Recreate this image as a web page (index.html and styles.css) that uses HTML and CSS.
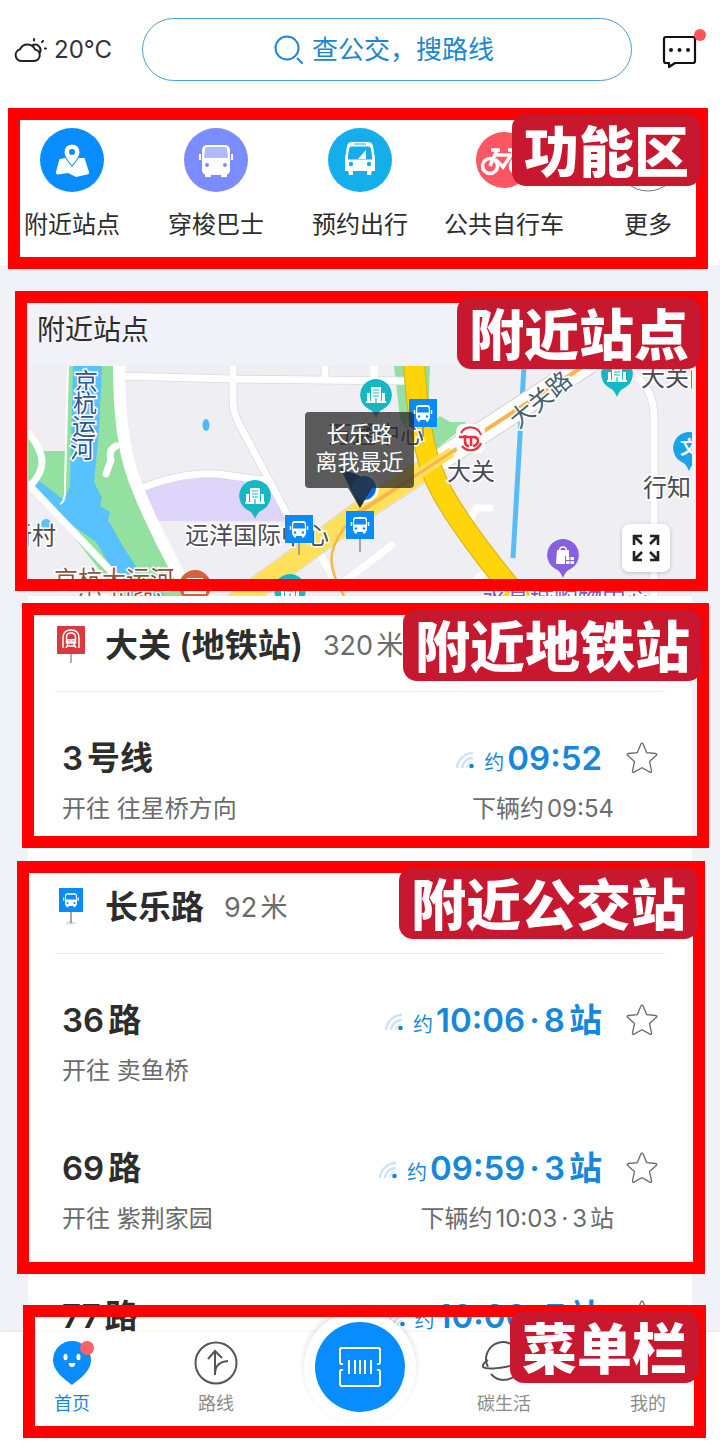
FILE: index.html
```html
<!DOCTYPE html>
<html lang="zh-CN">
<head>
    <meta charset="UTF-8">
    <meta name="viewport" content="width=device-width, initial-scale=1.0">
    <title>附近站点</title>
    <link rel="stylesheet" href="styles.css">
</head>
<body>
    <!-- shared symbols -->
    <svg class="symbols" aria-hidden="true">
        <symbol id="bus" viewBox="0 0 28 28">
            <rect width="28" height="28" fill="#0a8bfa"/>
            <rect x="7" y="6" width="14" height="15" rx="3" fill="#fff"/>
            <path d="M8.500 8h11l.5 5.500H8z" fill="#0a8bfa"/>
            <path d="M5.500 11v4M22.500 11v4" stroke="#fff" stroke-width="1.500"/>
            <path d="M8 20h3v2.500H9zM17 20h3l-1 2.500h-2z" fill="#fff"/>
            <circle cx="10" cy="17.500" r="1.200" fill="#0a8bfa"/>
            <circle cx="18" cy="17.500" r="1.200" fill="#0a8bfa"/>
        </symbol>
        <symbol id="star" viewBox="0 0 32 32">
            <path d="M16 1.200q.8 0 1.200 1l3.500 8.400 8.800.9q2.200.4.700 2l-6.700 6 2 9.400q.2 2-1.600 1.200L16 25.700l-7.900 4.400q-1.800.8-1.600-1.200l2-9.400-6.700-6q-1.500-1.600.7-2l8.800-.9 3.500-8.400q.4-1 1.200-1z" fill="none" stroke="#6b6b6b" stroke-width="1.300"/>
        </symbol>
        <symbol id="signal" viewBox="0 0 20 20">
            <path d="M1 18A16 16 0 0 1 17 3M6 18A11 11 0 0 1 17 8" fill="none" stroke="#cfe4f2" stroke-width="2.500"/>
            <path d="M10.500 18A6 6 0 0 1 16 12" fill="none" stroke="#d9eaf5" stroke-width="1.500"/>
            <circle cx="15.500" cy="16" r="2.300" fill="#1784d2"/>
        </symbol>
        <symbol id="building" viewBox="0 0 34 42">
            <path d="M17 1a16 16 0 0 1 7 30.300c-3 1.500-5 3.700-7 8.700-2-5-4-7.200-7-8.700A16 16 0 0 1 17 1z" fill="#14b8c4"/>
            <path d="M12 9h10v15H12zM8 15h3v9H8zM23 15h3v9h-3zM7 23h20v2H7z" fill="#fff"/>
            <path d="M14 12h6M14 15h6M14 18h6M17 20v5" stroke="#14b8c4" stroke-width="1.200"/>
        </symbol>
    </svg>

    <div class="app">
        <header class="topbar">
            <div class="weather">
                <svg width="34" height="26" viewBox="0 0 34 26" fill="none" stroke="#222" stroke-width="2" stroke-linecap="round">
                    <path d="M7 24a6 6 0 0 1-.8-11.800A8 8 0 0 1 21 12.500 5.800 5.800 0 0 1 20 24z"/>
                    <path d="M19 8a5.500 5.500 0 0 1 7 7.500M20 2v1.500M29 4l-1 1M31 11.500h1"/>
                </svg>
                <span>20°C</span>
            </div>
            <label class="search">
                <svg width="30" height="30" viewBox="0 0 30 30" fill="none" stroke="#1c86d1" stroke-width="2">
                    <circle cx="13" cy="13" r="11.500"/>
                    <path d="M23.500 23.500l4.500 4.500" stroke-linecap="round"/>
                </svg>
                <input type="text" placeholder="查公交，搜路线" aria-label="查公交，搜路线">
            </label>
            <button class="message" aria-label="消息">
                <svg width="44" height="42" viewBox="0 0 44 42">
                    <path d="M4 8h27q2 0 2 2v22q0 2-2 2H13l-6 4v-4H4q-2 0-2-2V10q0-2 2-2z" fill="none" stroke="#111" stroke-width="2.200" stroke-linejoin="round"/>
                    <circle cx="9" cy="21" r="2" fill="#111"/>
                    <circle cx="17.500" cy="21" r="2" fill="#111"/>
                    <circle cx="26" cy="21" r="2" fill="#111"/>
                    <circle cx="38" cy="6" r="6" fill="#ff5454"/>
                </svg>
            </button>
        </header>

        <main class="content">
            <section class="services">
                <a class="service" href="#">
                    <svg width="64" height="64" viewBox="0 0 64 64">
                        <circle cx="32" cy="32" r="32" fill="#078dff"/>
                        <path d="M19.500 31l6-1 6.500 9 6.500-9h6l4.500 14c.3 1.500-.5 2.500-2 2.500L36 49l-8-4-10 1.500c-1.500 0-2.500-1-2-2.500z" fill="#fff"/>
                        <path d="M32 16a8 8 0 0 1 8 8c0 5-5 10-8 14-3-4-8-9-8-14a8 8 0 0 1 8-8z" fill="#fff" stroke="#078dff" stroke-width="1"/>
                        <circle cx="32" cy="24" r="3" fill="#078dff"/>
                    </svg>
                    <span>附近站点</span>
                </a>
                <a class="service" href="#">
                    <svg width="64" height="64" viewBox="0 0 64 64">
                        <circle cx="32" cy="32" r="32" fill="#7b8cff"/>
                        <rect x="18" y="17" width="28" height="30" rx="5" fill="#fff"/>
                        <path d="M21 46h6v3h-6zM37 46h6v3h-6zM15 26h2v6h-2zM47 26h2v6h-2z" fill="#fff"/>
                        <path d="M23 19h18q2 0 2 2l1 9H20l1-9q0-2 2-2z" fill="#b3b9ff"/>
                        <circle cx="23" cy="37" r="2" fill="#7b8cff"/>
                        <circle cx="41" cy="37" r="2" fill="#7b8cff"/>
                    </svg>
                    <span>穿梭巴士</span>
                </a>
                <a class="service" href="#">
                    <svg width="64" height="64" viewBox="0 0 64 64">
                        <circle cx="32" cy="32" r="32" fill="#14aeea"/>
                        <path d="M24 14h16q4 0 5 4l2 12v13H17V30l2-12q1-4 5-4z" fill="#fff"/>
                        <path d="M20 42h5v5h-4zM39 42h5l-1 5h-4z" fill="#fff"/>
                        <path d="M23 19h18q1 0 1.300 1.500L44 31H20l1.700-10.500Q22 19 23 19zM26 16h12" fill="#14aeea" stroke="#14aeea"/>
                        <path d="M30 31l8-9v9" fill="#fff"/>
                        <circle cx="23" cy="36" r="2.200" fill="#14aeea"/>
                        <circle cx="41" cy="36" r="2.200" fill="#14aeea"/>
                    </svg>
                    <span>预约出行</span>
                </a>
                <a class="service" href="#">
                    <svg width="64" height="64" viewBox="0 0 64 64">
                        <circle cx="32" cy="32" r="28" fill="#ff5663"/>
                        <g fill="none" stroke="#fff" stroke-width="3.500">
                            <circle cx="18" cy="38" r="7.500"/>
                            <circle cx="46" cy="38" r="7.500"/>
                            <path d="M19 22h9M25 22l-7 16M24 27h15l-8 12-8-8M36 22h4l6 16"/>
                        </g>
                    </svg>
                    <span>公共自行车</span>
                </a>
                <a class="service" href="#">
                    <svg width="64" height="64" viewBox="0 0 64 64">
                        <circle cx="32" cy="32" r="31" fill="#fff" stroke="#777"/>
                        <circle cx="20" cy="32" r="3" fill="#555"/>
                        <circle cx="32" cy="32" r="3" fill="#555"/>
                        <circle cx="44" cy="32" r="3" fill="#555"/>
                    </svg>
                    <span>更多</span>
                </a>
                <div class="frame frame-services"><strong class="tag">功能区</strong></div>
            </section>

            <section class="nearby">
                <h2>附近站点</h2>
                <div class="map">
                    <svg class="map-canvas" viewBox="28 366 664 230" preserveAspectRatio="xMidYMid slice">
                        <rect x="28" y="366" width="664" height="230" fill="#eeeef3"/>
                        <!-- parks -->
                        <g fill="#93e0a0">
                            <path d="M68 366h47l4 80 24 60 26 50 20 40H120L70 532l-6-12-36-40v-42l12 13h26z"/>
                            <path d="M394 366h36l-2 60 12-10 10 6 16 0-6 8-20 16-4 28 14 6-10 8-40-70z"/>
                        </g>
                        <!-- canal -->
                        <path d="M73 366h29l-3 64-5 52 8 16-2 8 10 6-2 8 16 28 22 34 20 14h-38l-32-54-28-20-38-34 8-8 26 20 6-14z" fill="#58c2ff"/>
                        <path d="M68 366l-3 120q1 16-5 18" fill="none" stroke="#fff" stroke-width="2"/>
                        <path d="M142 490q60-20 130-8l15 39H155z" fill="#dfd5fb"/>
                        <ellipse cx="206" cy="425" rx="3.500" ry="6" fill="#4dbaf5"/>
                        <circle cx="46" cy="524" r="5" fill="#58c2ff"/>
                        <path d="M524 366l-4 70-7 122" fill="none" stroke="#58bdf7" stroke-width="5"/>
                        <!-- minor roads -->
                        <g fill="none" stroke="#d9d9de" stroke-width="8.500">
                            <path d="M120 376l113 3 175 2M233 366v35q0 14 10 30l55 104M325 366v12M142 488q50-20 90-12l38 5"/>
                            <path d="M638 378q16 14 16 40v178"/>
                        </g>
                        <g fill="none" stroke="#fff" stroke-width="7">
                            <path d="M120 376l113 3 175 2M233 366v35q0 14 10 30l55 104M325 366v12M142 488q50-20 90-12l38 5M374 366v20"/>
                            <path d="M638 378q16 14 16 40v178M318 550l16 30M340 585l52-40M460 530l10-10 6-12h14M476 580l16-14" stroke-linecap="round"/>
                            <path d="M28 432q14 18 14 30t-12 24l100 105"/>
                            <path d="M116 446q-8 4-5 14l-5 14" stroke-linecap="round"/>
                            <path d="M119 366q0 70 14 110t52 110l10 12" stroke-width="12"/>
                        </g>
                        <!-- trunk roads -->
                        <path d="M232 606l128-94 230-150" fill="none" stroke="#d7d3cc" stroke-width="23"/>
                        <path d="M232 606l128-94 230-150" fill="none" stroke="#fff" stroke-width="21"/>
                        <path d="M232 606l128-94 70-46" fill="none" stroke="#ffe05a" stroke-width="21"/>
                        <path d="M352 517l238-155" fill="none" stroke="#f6b64a" stroke-width="4"/>
                        <path d="M344 596q-18-30-10-50t26-34" fill="none" stroke="#f6b64a" stroke-width="2.500"/>
                        <path d="M414 360q4 80 22 120t86 122" fill="none" stroke="#d8ae12" stroke-width="22"/>
                        <path d="M414 360q4 80 22 120t86 122" fill="none" stroke="#ffd40a" stroke-width="20"/>
                        <path d="M400 486l52-34" stroke="#ffe05a" stroke-width="10"/>
                        <path d="M395 489l60-39" stroke="#f6b64a" stroke-width="3"/>
                        <!-- labels -->
                        <g class="map-label">
                            <text class="label-water" text-anchor="middle"><tspan x="86" y="390">京</tspan><tspan x="85" y="412">杭</tspan><tspan x="84" y="435">运</tspan><tspan x="82" y="458">河</tspan></text>
                            <text x="8" y="544">新村</text>
                            <text x="185" y="544">远洋国际中心</text>
                            <text x="328" y="443">万通中心</text>
                            <text x="447" y="480">大关</text>
                            <text class="label-road" text-anchor="middle" transform="translate(546 406) rotate(-40)">大关路</text>
                            <text x="641" y="386">大关门</text>
                            <text x="643" y="496">行知</text>
                            <text class="label-sight" x="54" y="588">京杭大运河</text>
                            <text class="label-sight" x="75" y="612">(杭州段)</text>
                            <text class="label-mall" x="482" y="607">水晶城购物中心</text>
                        </g>
                        <!-- pins -->
                        <use href="#building" x="359" y="378" width="34" height="42"/>
                        <use href="#building" x="238" y="479" width="34" height="42"/>
                        <use href="#building" x="600" y="357" width="34" height="42"/>
                        <use href="#building" x="273" y="573" width="34" height="42"/>
                        <circle cx="195" cy="586" r="16" fill="#d5603a"/>
                        <path d="M187 578h16v4h-3l2 8h4v4h-22v-4h4l2-8h-3z" fill="#fff"/>
                        <path d="M689 432a16 16 0 0 1 7 30.300c-3 1.500-5 3.700-7 8.700-2-5-4-7.200-7-8.700A16 16 0 0 1 689 432z" fill="#1aa3e8"/>
                        <text class="pin-text" x="680" y="454">文</text>
                        <path d="M563 539a16 16 0 0 1 7 30.300c-3 1.500-5 3.700-7 8.700-2-5-4-7.200-7-8.700A16 16 0 0 1 563 539z" fill="#8660e0"/>
                        <path d="M557 550h12v14h-13zM566 557h8v7h-8z" fill="#fff"/>
                        <path d="M559.500 551q0-4 3.500-4t3.500 4" fill="none" stroke="#fff" stroke-width="1.500"/>
                        <path d="M565.500 556v9M570 557v7M566 560.500h8" stroke="#8660e0"/>
                        <rect x="456" y="424" width="29" height="29" rx="7" fill="#fff"/>
                        <g fill="none" stroke="#e8303f">
                            <path d="M461 433a11 11 0 0 1 20 2M481 443a11 11 0 0 1-19 3" stroke-width="2.200"/>
                            <path d="M459 437h14q5 0 5 4t-5 5M465 435v6q0 5 4 5M471 437v9" stroke-width="2.600"/>
                        </g>
                        <circle cx="364" cy="488" r="15" fill="#fff"/>
                        <path d="M340 468l20 8 10 14-10 18z" fill="#06468a"/>
                        <circle cx="364" cy="488" r="12" fill="#0a6be0"/>
                        <path d="M423 425v12M299 541v14M360 538v14" stroke="#8a8f96" stroke-width="1.500"/>
                        <use href="#bus" x="409" y="399" width="28" height="28"/>
                        <use href="#bus" x="285" y="515" width="28" height="28"/>
                        <use href="#bus" x="346" y="511" width="28" height="28"/>
                    </svg>
                    <p class="bubble">长乐路<br>离我最近</p>
                    <button class="expand" aria-label="放大地图">
                        <svg width="30" height="30" viewBox="0 0 30 30" fill="none" stroke="#222" stroke-width="2.600">
                            <path d="M3 12V3h8M3 3l8 8M19 3h8v9M27 3l-8 8M3 18v9h8M3 27l8-8M27 18v9h-8M27 27l-8-8"/>
                        </svg>
                    </button>
                </div>
                <div class="frame frame-nearby"><strong class="tag">附近站点</strong></div>
            </section>

            <div class="stations">
                <section class="station">
                    <div class="station-head">
                        <svg width="28" height="38" viewBox="0 0 28 38">
                            <path d="M14 27v10" stroke="#999" stroke-width="1.500"/>
                            <rect width="28" height="28" rx="1" fill="#d93a3f"/>
                            <g fill="none" stroke="#fff" stroke-width="1.500">
                                <path d="M6 22V12q0-8 8-8t8 8v10"/>
                                <path d="M9.500 17V11q0-4 4.500-4t4.500 4v6zM11 18l-2 4M17 18l2 4M10 20h8"/>
                            </g>
                            <path d="M10 13h8v4h-8z" fill="#fff"/>
                            <path d="M11.500 15h1M15.500 15h1" stroke="#d93a3f" stroke-width="1.500"/>
                        </svg>
                        <h3>大关 (地铁站)</h3>
                        <span class="distance">320米</span>
                    </div>
                    <div class="line">
                        <div class="line-main">
                            <strong class="line-name">3号线</strong>
                            <span class="eta"><svg width="20" height="20"><use href="#signal"/></svg><small>约</small><b>09:52</b></span>
                            <button class="favorite" aria-label="收藏 3号线"><svg width="32" height="32"><use href="#star"/></svg></button>
                        </div>
                        <div class="line-sub"><span>开往 往星桥方向</span><span>下辆约09:54</span></div>
                    </div>
                    <div class="frame frame-metro"><strong class="tag">附近地铁站</strong></div>
                </section>

                <section class="station">
                    <div class="station-head">
                        <svg width="28" height="38" viewBox="0 0 28 38">
                            <ellipse cx="14" cy="35" rx="5" ry="1.500" fill="#d5e2ec"/>
                            <path d="M14 24v11" stroke="#777" stroke-width="1.300"/>
                            <use href="#bus" x="2" y="0" width="24" height="24"/>
                        </svg>
                        <h3>长乐路</h3>
                        <span class="distance">92米</span>
                    </div>
                    <div class="line">
                        <div class="line-main">
                            <strong class="line-name">36路</strong>
                            <span class="eta"><svg width="20" height="20"><use href="#signal"/></svg><small>约</small><b>10:06<span class="dot">·</span>8站</b></span>
                            <button class="favorite" aria-label="收藏 36路"><svg width="32" height="32"><use href="#star"/></svg></button>
                        </div>
                        <div class="line-sub"><span>开往 卖鱼桥</span></div>
                    </div>
                    <div class="line">
                        <div class="line-main">
                            <strong class="line-name">69路</strong>
                            <span class="eta"><svg width="20" height="20"><use href="#signal"/></svg><small>约</small><b>09:59<span class="dot">·</span>3站</b></span>
                            <button class="favorite" aria-label="收藏 69路"><svg width="32" height="32"><use href="#star"/></svg></button>
                        </div>
                        <div class="line-sub"><span>开往 紫荆家园</span><span>下辆约10:03<span class="dot">·</span>3站</span></div>
                    </div>
                    <div class="line">
                        <div class="line-main">
                            <strong class="line-name">77路</strong>
                            <span class="eta"><svg width="20" height="20"><use href="#signal"/></svg><small>约</small><b>10:00<span class="dot">·</span>7站</b></span>
                            <button class="favorite" aria-label="收藏 77路"><svg width="32" height="32"><use href="#star"/></svg></button>
                        </div>
                    </div>
                    <div class="frame frame-bus"><strong class="tag">附近公交站</strong></div>
                </section>
            </div>
        </main>

        <nav class="tabbar">
            <a class="tab active" href="#">
                <svg width="48" height="46" viewBox="0 0 48 46">
                    <path d="M24 1a19 19 0 0 1 19 19c0 12-13 20-19 25C18 40 5 32 5 20A19 19 0 0 1 24 1z" fill="#0a8bff"/>
                    <ellipse cx="17.500" cy="17" rx="2" ry="3.300" fill="#fff"/>
                    <ellipse cx="30.500" cy="17" rx="2" ry="3.300" fill="#fff"/>
                    <path d="M20.500 23h7q-.5 4-3.500 4t-3.500-4z" fill="#fff"/>
                    <circle cx="39" cy="8" r="7" fill="#ff5f66"/>
                </svg>
                <span>首页</span>
            </a>
            <a class="tab" href="#">
                <svg width="48" height="46" viewBox="0 0 48 46" fill="none" stroke="#555" stroke-width="2">
                    <circle cx="24" cy="23" r="20.500"/>
                    <path d="M23 35V12M16 19l7-8 7 7M23 34q0-12 13-13"/>
                </svg>
                <span>路线</span>
            </a>
            <a class="scan" href="#" aria-label="乘车码">
                <svg width="42" height="42" viewBox="0 0 42 42" fill="none" stroke="#fff" stroke-width="2">
                    <path d="M1 18V4q0-2 2-2h36q2 0 2 2v14M1 24v14q0 2 2 2h36q2 0 2-2V24M1 18h3M1 24h3M41 18h-3M41 24h-3"/>
                    <path d="M10 14v14M16 14v14M21 14v14M26 14v14M32 14v14"/>
                </svg>
            </a>
            <a class="tab" href="#">
                <svg width="48" height="46" viewBox="0 0 48 46" fill="none" stroke="#555" stroke-width="2">
                    <path d="M8 27a17 17 0 1 1 32-9M11 34a17 17 0 0 0 29-6"/>
                    <path d="M8 20q-6 4-5 7 4 3 22 0t20-12q1-4-7-2"/>
                </svg>
                <span>碳生活</span>
            </a>
            <a class="tab" href="#">
                <svg width="48" height="46" viewBox="0 0 48 46" fill="none" stroke="#555" stroke-width="2">
                    <circle cx="24" cy="13" r="9"/>
                    <path d="M7 42v-4q0-10 12-10h10q12 0 12 10v4z"/>
                </svg>
                <span>我的</span>
            </a>
            <div class="frame frame-tabs"><strong class="tag">菜单栏</strong></div>
        </nav>
    </div>
</body>
</html>
```

FILE: styles.css
```css
* {
    box-sizing: border-box;
}
body {
    margin: 0;
    font-family: Inter, "Noto Sans CJK SC", sans-serif;
    color: #2d2d2d;
    background: #f1f2f7;
    text-autospace: normal;
}
h2, h3, p {
    margin: 0;
}
a {
    color: inherit;
    text-decoration: none;
}
button {
    padding: 0;
    border: none;
    background: none;
    cursor: pointer;
}
svg {
    display: block;
    flex: none;
}
.symbols {
    position: absolute;
    width: 0;
    height: 0;
}
.app {
    display: flex;
    flex-direction: column;
    height: 100vh;
}

/* top bar */
.topbar {
    display: flex;
    align-items: center;
    gap: 30px;
    padding: 18px 14px 27px;
    background: #fff;
}
.weather {
    display: flex;
    align-items: center;
    gap: 6px;
    font-size: 24px;
    color: #333;
}
.search {
    flex: 1;
    display: flex;
    align-items: center;
    justify-content: center;
    gap: 8px;
    height: 63px;
    border: 1px solid #4a9fd8;
    border-radius: 32px;
}
.search input {
    width: 188px;
    padding: 0;
    border: none;
    outline: none;
    background: none;
    font: inherit;
    font-size: 26px;
    color: #1c86d1;
}
.search input::placeholder {
    color: #1c86d1;
}

/* red annotation frames lie over the sections */
.frame {
    position: absolute;
    z-index: 2;
    border: 12px solid #fe0000;
    pointer-events: none;
}
.tag {
    position: absolute;
    top: -6px;
    right: -5px;
    padding: 4px 12px 0;
    border-radius: 14px;
    background: #c8182f;
    color: #fff;
    font-size: 55px;
    font-weight: 900;
    line-height: 68px;
    white-space: nowrap;
}
.frame-services {
    inset: 0 12px -4px 8px;
}
.frame-nearby {
    inset: 26px 12px 5px 15px;
}
.frame-metro {
    inset: 4px -17px -8px -6px;
}
.frame-bus {
    inset: 0 -13px 78px -11px;
}
.frame-tabs {
    inset: -27px 14px 17px 23px;
}

.content {
    flex: 1;
    min-height: 0;
    overflow: hidden;
}
.services {
    position: relative;
    display: grid;
    grid-template-columns: repeat(5, 1fr);
    padding: 20px 0 24px;
    background: #fff;
}
.service {
    display: flex;
    flex-direction: column;
    align-items: center;
    gap: 17px;
    font-size: 24px;
    line-height: 32px;
    white-space: nowrap;
}

/* map */
.nearby {
    position: relative;
    padding: 45px 28px 0;
}
.nearby h2 {
    padding: 0 9px 16px;
    font-size: 28px;
    font-weight: 400;
    line-height: 40px;
}
.map {
    position: relative;
    height: 230px;
}
.map-canvas {
    width: 100%;
    height: 100%;
}
.map-label {
    font-size: 24px;
    fill: #4a4c55;
    stroke: #fff;
    stroke-width: 3px;
    paint-order: stroke;
}
.label-water {
    fill: #2d5590;
}
.label-road {
    fill: #46606e;
}
.label-sight {
    fill: #8a5640;
}
.label-mall {
    fill: #7a5cc4;
}
.pin-text {
    font-size: 18px;
    font-weight: 700;
    fill: #fff;
}
.bubble {
    position: absolute;
    top: 46px;
    left: 50%;
    width: 109px;
    margin-left: -55px;
    padding: 8px 0 12px;
    border-radius: 4px;
    background: rgba(40, 40, 40, 0.75);
    color: #fff;
    font-size: 22px;
    line-height: 28px;
    text-align: center;
}
.bubble::after {
    content: "";
    position: absolute;
    top: 100%;
    left: 50%;
    margin-left: -12px;
    border: 12px solid transparent;
    border-top: 20px solid rgba(40, 40, 40, 0.75);
    border-bottom: none;
}
.expand {
    position: absolute;
    right: 22px;
    bottom: 24px;
    display: grid;
    place-items: center;
    width: 48px;
    height: 48px;
    border-radius: 7px;
    background: #fff;
    box-shadow: 0 1px 4px rgba(0, 0, 0, 0.2);
}

/* stations */
.stations {
    margin: 0 28px;
    padding-top: 3px;
    background: #fff;
}
.station {
    position: relative;
    margin-bottom: 21px;
}
.station-head {
    display: flex;
    align-items: center;
    height: 93px;
    margin: 0 27px;
    padding-left: 2px;
    border-bottom: 1px solid #ececec;
}
.station-head h3 {
    margin: 0 20px 4px;
    font-size: 33px;
    font-weight: 600;
}
.distance {
    margin-bottom: 4px;
    font-size: 27px;
    color: #6b6b6b;
}
.line {
    padding: 46px 34px 16px;
}
.line-main {
    display: flex;
    align-items: center;
    height: 40px;
}
.line-name {
    font-size: 33px;
    font-weight: 600;
    line-height: 40px;
}
.eta {
    display: flex;
    align-items: baseline;
    gap: 3px;
    margin-left: auto;
    padding-top: 4px;
    color: #1787dc;
    line-height: 40px;
}
.eta small {
    margin-left: 5px;
    font-size: 20px;
}
.eta b {
    font-size: 33px;
    font-weight: 600;
}
.dot {
    margin: 0 4px;
}
.favorite {
    margin-left: 24px;
}
.line-sub {
    display: flex;
    justify-content: space-between;
    margin-top: 16px;
    padding-right: 44px;
    font-size: 24px;
    line-height: 30px;
    color: #6b6b6b;
}

/* bottom tabs */
.tabbar {
    position: relative;
    display: grid;
    grid-template-columns: repeat(5, 1fr);
    justify-items: center;
    align-items: start;
    height: 123px;
    padding-top: 8px;
    background: #fff;
    box-shadow: 0 -1px 2px rgba(0, 0, 0, 0.05);
}
.tab {
    display: flex;
    flex-direction: column;
    align-items: center;
    gap: 6px;
    font-size: 18px;
    line-height: 24px;
    color: #8c8c8c;
}
.tab.active {
    color: #1787dc;
}
.scan {
    display: grid;
    place-items: center;
    width: 90px;
    height: 90px;
    margin-top: -18px;
    border-radius: 50%;
    background: #078dff;
    box-shadow: 0 0 0 11px #fff, 0 -3px 6px 11px rgba(0, 0, 0, 0.12);
}
```
